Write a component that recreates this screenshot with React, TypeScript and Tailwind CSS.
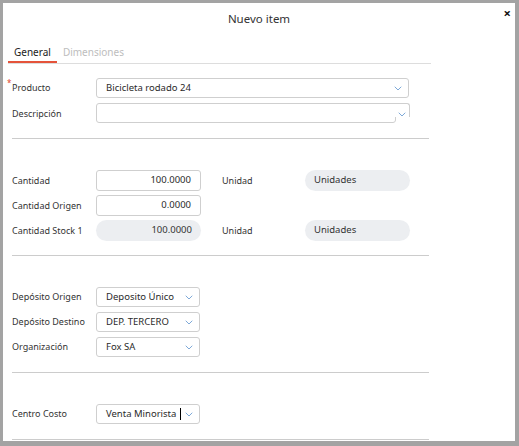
import React from 'react'

const font = { fontFamily: '"Noto Sans", "Open Sans", sans-serif' }

function Chevron() {
  return (
    <svg width="8" height="5" viewBox="0 0 8 5" fill="none" className="shrink-0">
      <path d="M1 1l3 3 3-3" stroke="#7ea9d8" strokeWidth="1" strokeLinecap="round" strokeLinejoin="round" />
    </svg>
  )
}

function Label({ children, required }: { children: React.ReactNode; required?: boolean }) {
  return (
    <div className="relative w-[84px] shrink-0 whitespace-nowrap text-[9px] text-[#333]">
      {required && <span className="absolute -left-[5px] -top-[4px] text-[8px] text-[#e0442a]">*</span>}
      {children}
    </div>
  )
}

function Select({ value, width, caret }: { value: string; width: string; caret?: boolean }) {
  return (
    <div className={`${width} h-[20px] flex items-center justify-between pl-[9px] pr-[6px] border border-[#cfcfcf] rounded-[3px] bg-white text-[9.5px] text-[#2a2a2a] whitespace-nowrap`}>
      <span className="flex items-center">
        {value}
        {caret && <span className="ml-[4px] w-px h-[12px] bg-black" />}
      </span>
      <Chevron />
    </div>
  )
}

function NumberInput({ value }: { value: string }) {
  return (
    <div className="w-[105px] h-[21px] flex items-center justify-end pr-[9px] border border-[#cfcfcf] rounded-[3px] text-[9.5px] text-[#2a2a2a]">
      {value}
    </div>
  )
}

function Pill({ value, right }: { value: string; right?: boolean }) {
  return (
    <div className={`w-[105px] h-[21px] flex items-center ${right ? 'justify-end pr-[9px]' : 'pl-[9px]'} rounded-full bg-[#eceef1] text-[9.5px] text-[#333]`}>
      {value}
    </div>
  )
}

function Separator() {
  return <div className="w-[417px] h-px bg-[#cccccc]" />
}

export default function App() {
  return (
    <div style={font} className="w-[519px] h-[446px] bg-white border-l-[3px] border-t-[3px] border-r-[4px] border-b-[5px] border-[#a3a3a3] relative overflow-hidden">
      {/* Header */}
      <div className="h-[39px] pt-[8px] text-center text-[11.5px] leading-[16px] text-[#333]">Nuevo item</div>
      <button className="absolute right-[4px] top-[4px] text-[13px] leading-none font-bold text-[#111]">×</button>

      {/* Tabs */}
      <div className="ml-[5px] w-[423px] flex border-b border-[#dddddd]">
        <div className="px-[6px] pt-[3px] pb-[2px] text-[10px] leading-[14px] text-[#222] border-b-2 border-[#e5533a]">General</div>
        <div className="px-[6px] pt-[3px] pb-[2px] text-[10px] leading-[14px] text-[#bdbdbd]">Dimensiones</div>
      </div>

      <div className="pl-[9px]">
        {/* Producto / Descripción */}
        <div className="mt-[14px] flex items-center">
          <Label required>Producto</Label>
          <Select value="Bicicleta rodado 24" width="w-[313px]" />
        </div>
        <div className="mt-[5px] flex items-start">
          <div className="pt-[4px]"><Label>Descripción</Label></div>
          <div className="relative w-[314px] h-[20px]">
            <div className="w-[300px] h-[20px] border border-[#cfcfcf] rounded-[3px]" />
            <div className="absolute right-0 top-0 w-[20px] h-[14px] border-t border-r border-[#cfcfcf] rounded-tr-[3px] flex items-end justify-end pr-[3px] bg-white">
              <Chevron />
            </div>
          </div>
        </div>
        <div className="mt-[15px]"><Separator /></div>

        {/* Cantidades */}
        <div className="mt-[31px] flex flex-col gap-[4px]">
          <div className="flex items-center">
            <Label>Cantidad</Label>
            <NumberInput value="100.0000" />
            <div className="ml-[21px] w-[83px] text-[9px] text-[#333]">Unidad</div>
            <Pill value="Unidades" />
          </div>
          <div className="flex items-center">
            <Label>Cantidad Origen</Label>
            <NumberInput value="0.0000" />
          </div>
          <div className="flex items-center">
            <Label>Cantidad Stock 1</Label>
            <Pill value="100.0000" right />
            <div className="ml-[21px] w-[83px] text-[9px] text-[#333]">Unidad</div>
            <Pill value="Unidades" />
          </div>
        </div>
        <div className="mt-[14px]"><Separator /></div>

        {/* Depósitos */}
        <div className="mt-[31px] flex flex-col gap-[5px]">
          <div className="flex items-center">
            <Label>Depósito Origen</Label>
            <Select value="Deposito Único" width="w-[104px]" />
          </div>
          <div className="flex items-center">
            <Label>Depósito Destino</Label>
            <Select value="DEP. TERCERO" width="w-[104px]" />
          </div>
          <div className="flex items-center">
            <Label>Organización</Label>
            <Select value="Fox SA" width="w-[104px]" />
          </div>
        </div>
        <div className="mt-[15px]"><Separator /></div>

        {/* Centro costo */}
        <div className="mt-[31px] flex items-center">
          <Label>Centro Costo</Label>
          <Select value="Venta Minorista" width="w-[104px]" caret />
        </div>
        <div className="mt-[15px]"><Separator /></div>
      </div>
    </div>
  )
}
